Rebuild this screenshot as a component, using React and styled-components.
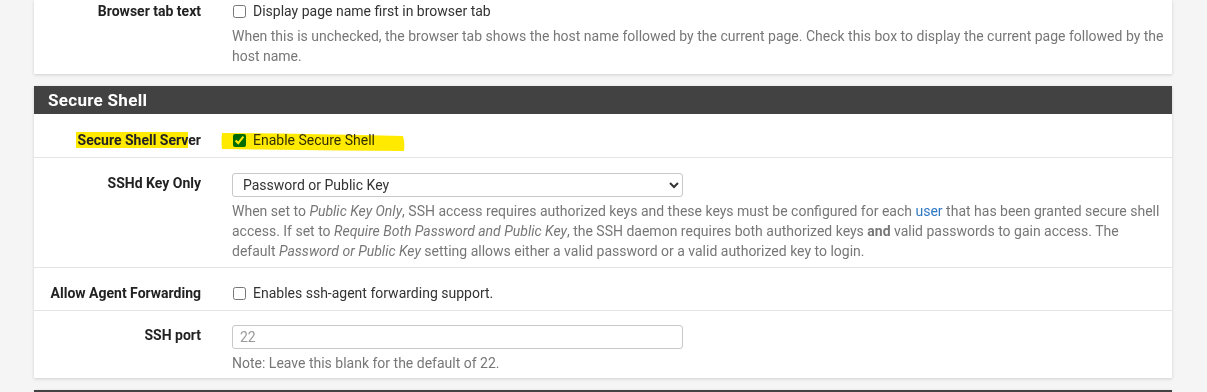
import React from 'react';
import styled, { createGlobalStyle } from 'styled-components';

const GlobalStyle = createGlobalStyle`
  body {
    margin: 0;
    background: #f5f5f5;
    font-family: Roboto, "Liberation Sans", sans-serif;
    font-size: 14px;
    color: #333;
  }
`;

const Page = styled.div`
  width: 1207px;
  height: 392px;
  overflow: hidden;
  padding-left: 34px;
  box-sizing: border-box;
`;

const Panel = styled.div`
  width: 1138px;
  background: #fff;
  box-shadow: 0 1px 3px rgba(0, 0, 0, 0.16);
  margin-bottom: 12px;
`;

const PanelHeading = styled.div`
  background: #424242;
  color: #fff;
  height: 28px;
  line-height: 29px;
  padding-left: 14px;
  font-size: 17px;
  font-weight: 700;
  letter-spacing: 0.3px;
`;

const Row = styled.div`
  position: relative;
  display: flex;
  padding: ${p => p.$top ?? 15}px 0 ${p => p.$bottom ?? 7}px;
  line-height: 20px;
  & + & {
    border-top: 1px solid #e4e4e4;
  }
`;

const Label = styled.div`
  width: 167px;
  flex: none;
  padding-right: 15px;
  text-align: right;
  font-weight: 700;
  color: #222;
`;

const Control = styled.div`
  flex: 1;
  padding: 0 7px 0 16px;
`;

const CheckLabel = styled.label`
  display: flex;
  align-items: center;
  color: #333;
`;

const Checkbox = styled.input.attrs({ type: 'checkbox' })`
  width: 13px;
  height: 13px;
  margin: 0 7px 0 1px;
`;

const Help = styled.div`
  color: #777;
  margin-top: ${p => p.$gap ?? 0}px;
`;

const Link = styled.a`
  color: #2f78c4;
  text-decoration: none;
`;

const Select = styled.select`
  display: block;
  width: 451px;
  height: 24px;
  border: 1px solid #c8c8c8;
  border-radius: 3px;
  background: #fff;
  font: inherit;
  color: #333;
  padding: 0 6px;
`;

const Input = styled.input`
  display: block;
  width: 451px;
  height: 24px;
  box-sizing: border-box;
  border: 1px solid #c8c8c8;
  border-radius: 3px;
  font: inherit;
  padding: 0 7px;
  &::placeholder {
    color: #9a9a9a;
  }
`;

const Mark = styled.span`
  background: #ffea00;
  padding: 0 0 0 2px;
  margin-left: -2px;
`;

const Highlighter = styled.svg`
  position: absolute;
  left: 186px;
  top: 17px;
  mix-blend-mode: multiply;
  pointer-events: none;
`;

export default function App() {
  return (
    <Page>
      <GlobalStyle />
      <Panel>
        <Row $top={1} $bottom={8}>
          <Label>Browser tab text</Label>
          <Control>
            <CheckLabel>
              <Checkbox />
              Display page name first in browser tab
            </CheckLabel>
            <Help $gap={5}>
              When this is unchecked, the browser tab shows the host name followed by the current page. Check this box to display the current page followed by the host name.
            </Help>
          </Control>
        </Row>
      </Panel>

      <Panel>
        <PanelHeading>Secure Shell</PanelHeading>
        <Row $top={16}>
          <Label>
            <Mark>Secure Shell Serv</Mark>er
          </Label>
          <Control>
            <CheckLabel>
              <Checkbox defaultChecked />
              Enable Secure Shell
            </CheckLabel>
          </Control>
          <Highlighter width="190" height="22" viewBox="0 0 190 22">
            <path d="M2 2 L60 2.5 L140 4 L183 5 Q185 12 184 20 L120 19.5 L40 18.5 L2 18 Q1 10 2 2 Z" fill="#ffea00" />
          </Highlighter>
        </Row>
        <Row $bottom={6}>
          <Label>SSHd Key Only</Label>
          <Control>
            <Select defaultValue="both">
              <option value="both">Password or Public Key</option>
              <option value="key">Public Key Only</option>
              <option value="require">Require Both Password and Public Key</option>
            </Select>
            <Help $gap={4}>
              When set to <i>Public Key Only</i>, SSH access requires authorized keys and these keys must be configured for each{' '}
              <Link href="#">user</Link> that has been granted secure shell access. If set to{' '}
              <i>Require Both Password and Public Key</i>, the SSH daemon requires both authorized keys <b>and</b> valid
              passwords to gain access. The default <i>Password or Public Key</i> setting allows either a valid password or
              a valid authorized key to login.
            </Help>
          </Control>
        </Row>
        <Row>
          <Label>Allow Agent Forwarding</Label>
          <Control>
            <CheckLabel>
              <Checkbox />
              Enables ssh-agent forwarding support.
            </CheckLabel>
          </Control>
        </Row>
        <Row $top={14} $bottom={5}>
          <Label>SSH port</Label>
          <Control>
            <Input placeholder="22" />
            <Help $gap={4}>Note: Leave this blank for the default of 22.</Help>
          </Control>
        </Row>
      </Panel>
      <Panel>
        <PanelHeading>&nbsp;</PanelHeading>
      </Panel>
    </Page>
  );
}
